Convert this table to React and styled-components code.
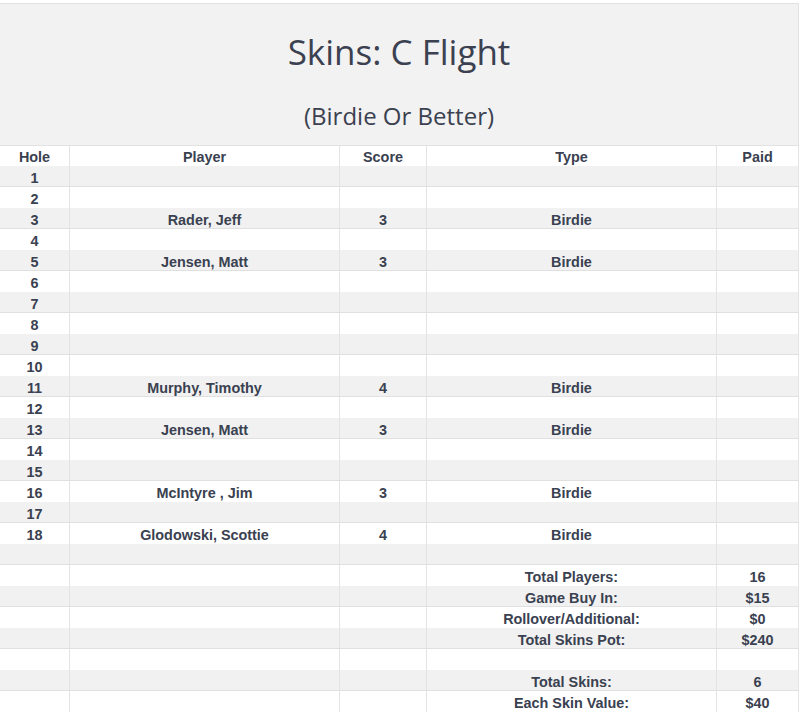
import React from "react";
import styled, { createGlobalStyle } from "styled-components";

const Global = createGlobalStyle`
  html, body { margin: 0; padding: 0; background: #ffffff; }
  body { font-family: "Liberation Sans", Arial, sans-serif; color: #3a4150; }
`;

const Page = styled.div`
  width: 799px;
  padding-top: 3px;
`;

const Header = styled.header`
  box-sizing: border-box;
  height: 143px;
  background: #f2f2f2;
  border-top: 1px solid #e2e2e2;
  border-right: 1px solid #e2e2e2;
  border-bottom: 1px solid #e2e2e2;
  display: flex;
  flex-direction: column;
  align-items: center;
  font-family: "Open Sans", "Noto Sans", sans-serif;
  color: #3b4150;
`;

const Title = styled.h1`
  margin: 24px 0 0;
  font-size: 35px;
  font-weight: 400;
  line-height: 48px;
`;

const Subtitle = styled.h2`
  margin: 24px 0 0;
  font-size: 24px;
  font-weight: 400;
  line-height: 32px;
`;

const Row = styled.div`
  box-sizing: border-box;
  display: grid;
  grid-template-columns: 70px 270px 87px 290px 82px;
  height: ${(p) => (p.$head ? "20px" : "21px")};
  background: ${(p) => (p.$shade ? "#f1f1f1" : "#ffffff")};
  border-bottom: ${(p) => (p.$shade ? "1px solid #e0e0e0" : "none")};
`;

const Cell = styled.div`
  box-sizing: border-box;
  border-right: 1px solid #e4e4e4;
  display: flex;
  align-items: center;
  justify-content: center;
  font-size: 14.4px;
  font-weight: 700;
  color: #3a4150;
  white-space: nowrap;
  padding-top: ${(p) => (p.$head ? "1px" : p.$shade ? "3px" : "2px")};
`;

const holes = [
  ["1", "", "", ""],
  ["2", "", "", ""],
  ["3", "Rader, Jeff", "3", "Birdie"],
  ["4", "", "", ""],
  ["5", "Jensen, Matt", "3", "Birdie"],
  ["6", "", "", ""],
  ["7", "", "", ""],
  ["8", "", "", ""],
  ["9", "", "", ""],
  ["10", "", "", ""],
  ["11", "Murphy, Timothy", "4", "Birdie"],
  ["12", "", "", ""],
  ["13", "Jensen, Matt", "3", "Birdie"],
  ["14", "", "", ""],
  ["15", "", "", ""],
  ["16", "McIntyre , Jim", "3", "Birdie"],
  ["17", "", "", ""],
  ["18", "Glodowski, Scottie", "4", "Birdie"],
];

const summary = [
  ["", ""],
  ["Total Players:", "16"],
  ["Game Buy In:", "$15"],
  ["Rollover/Additional:", "$0"],
  ["Total Skins Pot:", "$240"],
  ["", ""],
  ["Total Skins:", "6"],
  ["Each Skin Value:", "$40"],
];

export default function App() {
  const rows = [
    ...holes.map((h) => [h[0], h[1], h[2], h[3], ""]),
    ...summary.map((s) => ["", "", "", s[0], s[1]]),
  ];
  return (
    <Page>
      <Global />
      <Header>
        <Title>Skins: C Flight</Title>
        <Subtitle>(Birdie Or Better)</Subtitle>
      </Header>
      <Row $head>
        <Cell $head>Hole</Cell>
        <Cell $head>Player</Cell>
        <Cell $head>Score</Cell>
        <Cell $head>Type</Cell>
        <Cell $head>Paid</Cell>
      </Row>
      {rows.map((r, i) => (
        <Row key={i} $shade={i % 2 === 0}>
          {r.map((c, j) => (
            <Cell key={j} $shade={i % 2 === 0}>{c}</Cell>
          ))}
        </Row>
      ))}
    </Page>
  );
}
